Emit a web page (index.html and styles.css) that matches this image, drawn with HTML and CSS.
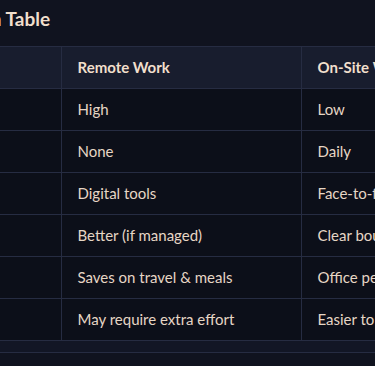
FILE: index.html
```html
<!DOCTYPE html>
<html lang="en">
<head>
<meta charset="utf-8">
<link rel="stylesheet" href="styles.css">
</head>
<body>
<div class="viewport">
  <div class="page">
    <h2 class="title">Comparison Table</h2>
    <div class="table-wrap">
      <table class="cmp">
        <thead>
          <tr><th class="c1">Aspect</th><th class="c2">Remote Work</th><th class="c3">On-Site Work</th></tr>
        </thead>
        <tbody>
          <tr><td>Flexibility</td><td>High</td><td>Low</td></tr>
          <tr><td>Commute</td><td>None</td><td>Daily</td></tr>
          <tr><td>Collaboration</td><td>Digital tools</td><td>Face-to-face</td></tr>
          <tr><td>Work-life balance</td><td>Better (if managed)</td><td>Clear boundaries</td></tr>
          <tr><td>Costs</td><td>Saves on travel &amp; meals</td><td>Office perks</td></tr>
          <tr><td>Team bonding</td><td>May require extra effort</td><td>Easier to sustain</td></tr>
        </tbody>
      </table>
      <div class="track"></div>
    </div>
  </div>
</div>
</body>
</html>
```
FILE: styles.css
```css
html, body {
  margin: 0;
  padding: 0;
  background: #10131f;
}
body {
  font-family: Lato, "Open Sans", sans-serif;
  color: #ecdcca;
}
.viewport {
  width: 375px;
  height: 366px;
  overflow: hidden;
}
.page {
  margin-left: -180px;
  width: 900px;
}
.title {
  margin: 0 0 0 80px;
  height: 46px;
  box-sizing: border-box;
  padding-top: 7px;
  font-size: 19px;
  font-weight: 700;
  line-height: 24px;
  color: #f1dfcc;
  white-space: nowrap;
}
.table-wrap {
  border-top: 1px solid #262c42;
}
.cmp {
  border-collapse: collapse;
  table-layout: fixed;
  width: 721px;
}
.c1 { width: 241px; }
.c2 { width: 240px; }
.c3 { width: 240px; }
.cmp th,
.cmp td {
  height: 42px;
  box-sizing: border-box;
  padding: 0 16px;
  text-align: left;
  font-size: 15px;
  white-space: nowrap;
  border-bottom: 1px solid #262c42;
  border-right: 1px solid #262c42;
}
.cmp th {
  height: 41px;
  background: #181d2e;
  font-weight: 700;
  color: #f1dfcc;
}
.cmp td {
  background: #0c0f19;
  font-weight: 400;
  color: #e6d6c5;
}
.track {
  height: 11px;
  background: #121625;
  border-bottom: 1px solid #262c42;
}
```
